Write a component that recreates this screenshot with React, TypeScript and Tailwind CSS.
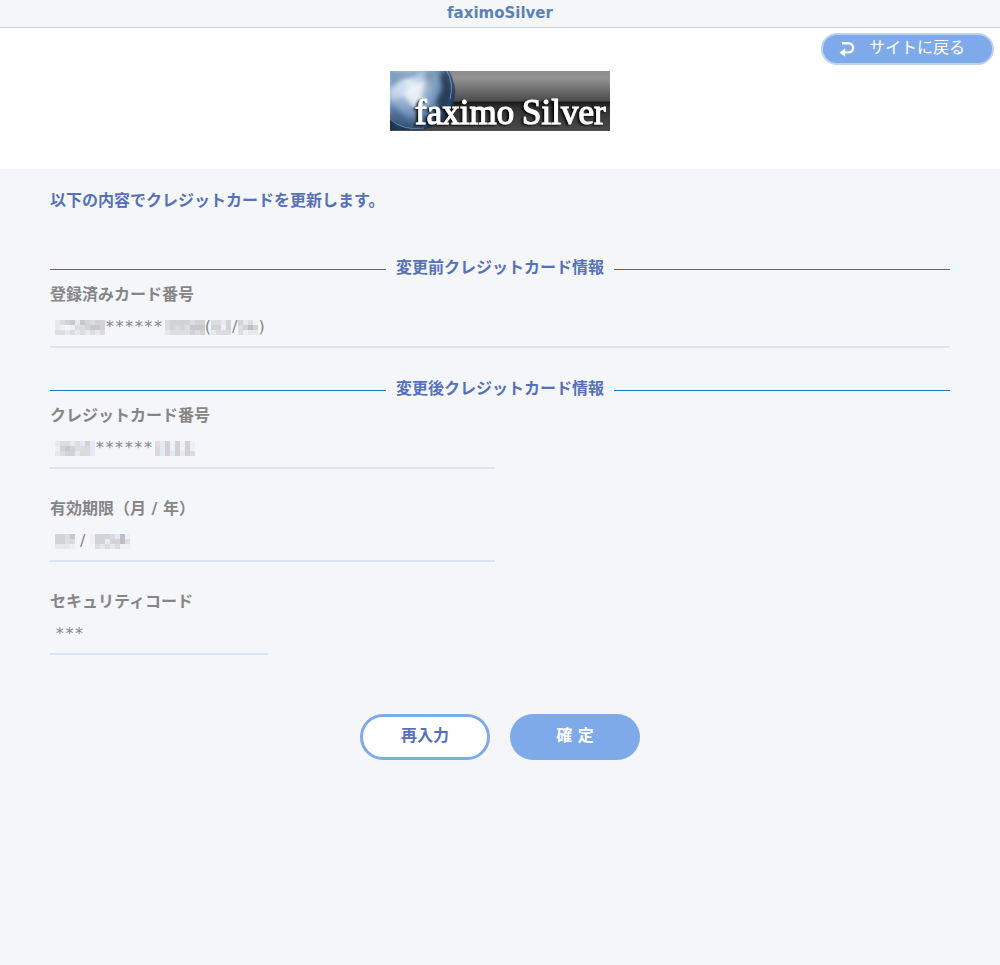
import React from 'react';

const PALETTE: Record<string, string> = {
  '0': 'bg-transparent',
  '1': 'bg-[#eff0f2]',
  '2': 'bg-[#e6e8ec]',
  '3': 'bg-[#dcdde0]',
  '4': 'bg-[#d2d3d6]',
  '5': 'bg-[#c6c8cb]',
  '6': 'bg-[#c2bdc0]',
  b: 'bg-[#e3eaf5]',
  c: 'bg-[#e9f3f7]',
  d: 'bg-[#d4dde4]',
  r: 'bg-[#e3dcdd]',
  s: 'bg-[#d6d0d3]',
  y: 'bg-[#ddd9d4]',
};

// Masked digits, one character per 5px cell
const Mosaic: React.FC<{ rows: string[] }> = ({ rows }) => (
  <span className="flex flex-col" aria-hidden="true">
    {rows.map((row, i) => (
      <span key={i} className="flex">
        {row.split('').map((cell, j) => (
          <span key={j} className={`h-[5px] w-[5px] ${PALETTE[cell]}`}></span>
        ))}
      </span>
    ))}
  </span>
);

const Stars: React.FC<{ children: string }> = ({ children }) => (
  <span className="h-6 pr-0.5 font-['DejaVu_Sans_Mono',monospace] text-base leading-6">{children}</span>
);

const SectionTitle: React.FC<{ children: React.ReactNode }> = ({ children }) => (
  <h2 className="flex h-7 items-center gap-[10px] font-bold text-[#5771b8]">
    <span className="h-px flex-1 bg-[#2477b5]"></span>
    <span className="h-7 leading-[26px]">{children}</span>
    <span className="h-px flex-1 bg-[#2477b5]"></span>
  </h2>
);

interface FieldProps {
  label: string;
  className: string;
  children: React.ReactNode;
}

const Field: React.FC<FieldProps> = ({ label, className, children }) => (
  <div className={`mb-7 ${className}`}>
    <dt className="h-6 font-bold leading-6">{label}</dt>
    <dd className="flex h-[41px] items-center border-b-2 border-[#dce3f2] pl-[5px] pt-px">{children}</dd>
  </div>
);

const Logo: React.FC = () => (
  <svg width="220" height="60" viewBox="0 0 220 60" role="img" aria-label="faximo Silver">
    <defs>
      <linearGradient id="plate" x1="0" y1="0" x2="0" y2="1">
        <stop offset="0" stopColor="#8c8c8c" />
        <stop offset="0.12" stopColor="#929292" />
        <stop offset="0.5" stopColor="#4b4b4b" />
        <stop offset="0.52" stopColor="#181818" />
        <stop offset="0.6" stopColor="#303030" />
        <stop offset="1" stopColor="#494949" />
      </linearGradient>
      <radialGradient id="globe" cx="0.38" cy="0.36" r="0.7">
        <stop offset="0" stopColor="#e4eef8" />
        <stop offset="0.3" stopColor="#a9c3de" />
        <stop offset="0.62" stopColor="#6f8fb6" />
        <stop offset="0.88" stopColor="#2f4b70" />
        <stop offset="1" stopColor="#14243c" />
      </radialGradient>
      <filter id="cloud" x="-20%" y="-20%" width="140%" height="140%">
        <feGaussianBlur stdDeviation="2" />
      </filter>
      <filter id="shade" x="-5%" y="-20%" width="110%" height="150%">
        <feDropShadow dx="-2" dy="1" stdDeviation="1" floodColor="#000" floodOpacity="0.9" />
      </filter>
      <clipPath id="frame">
        <rect width="220" height="60" />
      </clipPath>
    </defs>
    <g clipPath="url(#frame)">
      <rect width="220" height="60" fill="url(#plate)" />
      <rect width="20" height="60" fill="#1c3049" />
      <circle cx="27" cy="21" r="38" fill="url(#globe)" />
      <g filter="url(#cloud)">
        <path d="M0 0h32l-8 6-12 3-12 8z" fill="#5c81ab" opacity="0.6" />
        <path d="M0 19l10-7 8 2-6 12-12 4z" fill="#d7e4f1" opacity="0.6" />
        <path d="M14 24l6-10 18-5 2 8-9 8 8 8-16 3z" fill="#ffffff" opacity="0.7" />
        <path d="M36 0l8 2-3 15-9 7 3-15z" fill="#54718f" opacity="0.4" />
        <path d="M50 2l8 0 5 20-10 20-7-11 6-13z" fill="#172b45" opacity="0.7" />
        <path d="M0 34l12 8 13 15H4z" fill="#36557b" opacity="0.5" />
      </g>
      <path d="M57 0q7 12 3 28" fill="none" stroke="#9db9d6" strokeWidth="1" opacity="0.6" />
      <path d="M0 48q12 12 34 9" fill="none" stroke="#7390b0" strokeWidth="1" opacity="0.8" />
      <text
        y="53"
        fill="#fff"
        stroke="#fff"
        strokeWidth="1"
        filter="url(#shade)"
        className="font-['Liberation_Serif',serif] text-[35px]"
      >
        <tspan x="25">faximo</tspan>
        <tspan x="132">Silver</tspan>
      </text>
      <path d="M0 59.5h220" stroke="#4f4f4f" />
    </g>
  </svg>
);

const BackIcon: React.FC = () => (
  <svg width="16" height="16" viewBox="0 0 16 16" aria-hidden="true">
    <path d="M3 2.2h6.5a4.6 4.6 0 0 1 0 9.2H5" fill="none" stroke="#fff" strokeWidth="2.4" />
    <path d="M0.5 11.4L6.2 7.2v8.6z" fill="#fff" />
  </svg>
);

export default function App() {
  return (
    <div className="min-h-screen bg-[#f4f6fa] font-['DejaVu_Sans','Noto_Sans_CJK_JP',sans-serif] text-base text-[#868686]" lang="ja">
      <h1 className="h-7 border-b border-[#c3d5e6] text-center text-[15px] font-bold leading-[26px] text-[#5c82b4]">
        faximoSilver
      </h1>

      <header className="relative flex h-[141px] justify-center bg-white pt-[43px]">
        <Logo />
        <a
          href="#"
          className="absolute right-[6px] top-[5px] flex h-8 w-[173px] items-center gap-[14px] rounded-full border-2 border-[#bdd2f2] bg-[#7faae9] pl-4 text-white"
        >
          <BackIcon />
          <span className="h-7 leading-[26px]">サイトに戻る</span>
        </a>
      </header>

      <main className="px-[50px] pt-5">
        <p className="mb-[42px] h-6 font-bold leading-6 text-[#5771b8]">以下の内容でクレジットカードを更新します。</p>

        <section>
          <SectionTitle>変更前クレジットカード情報</SectionTitle>
          <dl>
            <Field label="登録済みカード番号" className="w-full">
              <Mosaic rows={['2345b54344', '2101334554', '3323232323']} />
              <Stars>******</Stars>
              <Mosaic rows={['34444344', '34y43555', '23333434']} />
              <span>(</span>
              <Mosaic rows={['3324', '4414', '2333']} />
              <span className="px-px">/</span>
              <Mosaic rows={['4231', '3464', '3122']} />
              <span>)</span>
            </Field>
          </dl>
        </section>

        <section>
          <SectionTitle>変更後クレジットカード情報</SectionTitle>
          <dl className="grid grid-cols-4 gap-x-[10px]">
            <Field label="クレジットカード番号" className="col-span-2">
              <Mosaic rows={['233brbsb', '1454r3yb', '2344bydb']} />
              <Stars>******</Stars>
              <Mosaic rows={['rbscscsc', 'ybscscsc', 'ybsbsbsd']} />
            </Field>
            <Field label="有効期限（月 / 年）" className="col-span-2 col-start-1">
              <Mosaic rows={['4435', '44rd', '2221']} />
              <span className="px-[5px]">/</span>
              <Mosaic rows={['1444db6c', '144b4463', '0323231c']} />
            </Field>
            <Field label="セキュリティコード" className="col-start-1">
              <Stars>***</Stars>
            </Field>
          </dl>
        </section>

        <div className="mt-[31px] flex justify-center gap-5 pb-5 font-bold">
          <button
            type="button"
            className="h-[46px] w-[130px] rounded-full border-3 border-[#7faae9] bg-white pb-0.5 text-[#5771b8]"
          >
            再入力
          </button>
          <button type="submit" className="h-[46px] w-[130px] rounded-full bg-[#7faae9] pb-0.5 text-white">
            確 定
          </button>
        </div>
      </main>
    </div>
  );
}
